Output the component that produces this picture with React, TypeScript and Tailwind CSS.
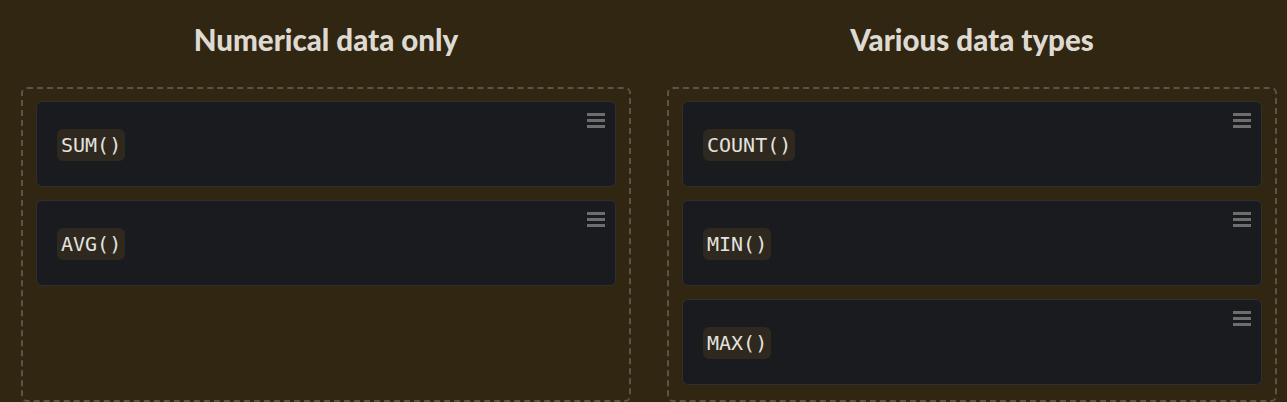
import type { ReactNode } from 'react';

const COLUMNS: { title: string; items: string[] }[] = [
  { title: 'Numerical data only', items: ['SUM()', 'AVG()'] },
  { title: 'Various data types', items: ['COUNT()', 'MIN()', 'MAX()'] },
];

function GripIcon() {
  return (
    <svg width="18" height="16" viewBox="0 0 18 16" className="absolute top-[10px] right-[10px]">
      <rect x="0" y="1" width="18" height="3" fill="#6e6e70" />
      <rect x="0" y="7" width="18" height="3" fill="#6e6e70" />
      <rect x="0" y="13" width="18" height="3" fill="#6e6e70" />
    </svg>
  );
}

function Card({ children }: { children: ReactNode }) {
  return (
    <div className="relative h-[86px] bg-[#1a1b1e] border border-[#2f2f33] rounded-md flex items-center pl-5 pt-[2px]">
      <GripIcon />
      <code className="bg-[#2e281f] rounded-md px-1 h-8 flex items-center text-[20px] text-[#e4e2de] font-['DejaVu_Sans_Mono',monospace]">
        {children}
      </code>
    </div>
  );
}

export default function App() {
  return (
    <div className="w-[1287px] h-[402px] overflow-hidden bg-[#302612] pl-[21px] pr-[10px] grid grid-cols-2 gap-x-[36px] font-['Lato',sans-serif]">
      {COLUMNS.map((col) => (
        <div key={col.title} className="flex flex-col">
          {/* Heading */}
          <h2 className="pt-[21px] h-[87px] text-center text-[29.5px] leading-[38px] font-black text-[#dedad2]">
            {col.title}
          </h2>

          {/* Drop zone */}
          <div className="flex-1 border-2 border-dashed border-[#5b5444] rounded-md px-[13px] pt-[12px] pb-[12px] flex flex-col gap-[13px]">
            {col.items.map((item) => (
              <Card key={item}>{item}</Card>
            ))}
          </div>
        </div>
      ))}
    </div>
  );
}
